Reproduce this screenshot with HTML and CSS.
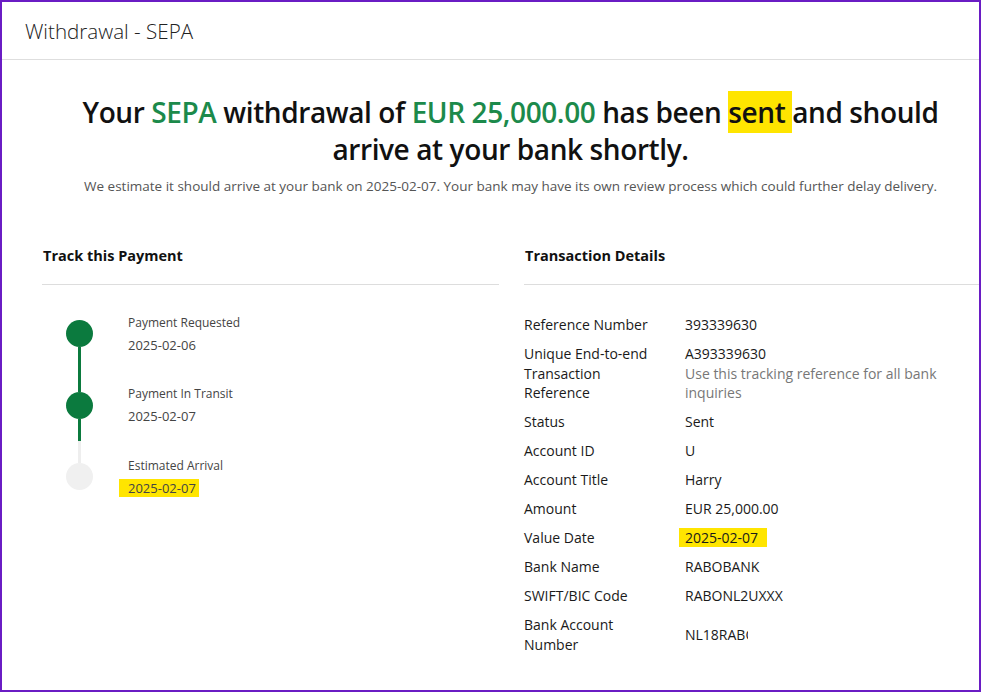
FILE: index.html
```html
<!DOCTYPE html>
<html lang="en">
<head>
  <meta charset="UTF-8">
  <meta name="viewport" content="width=device-width, initial-scale=1.0">
  <title>Withdrawal - SEPA</title>
  <link rel="stylesheet" href="styles.css">
</head>
<body>

  <div class="frame">
    <div class="page-header">Withdrawal - SEPA</div>

    <div class="content">
      <div class="hero">
        <h1>Your <span class="green">SEPA</span> withdrawal of <span class="green">EUR 25,000.00</span> has been <span class="mark mark-word">sent </span>and should arrive at your bank shortly.</h1>
        <p>We estimate it should arrive at your bank on 2025-02-07. Your bank may have its own review process which could further delay delivery.</p>
      </div>

      <div class="columns">
        <div class="panel">
          <div class="panel-title">Track this Payment</div>
          <div class="steps">
            <div class="step done">
              <div class="track">
                <div class="line line-none"></div>
                <div class="dot"></div>
                <div class="line"></div>
              </div>
              <div class="step-text">
                <div class="step-label">Payment Requested</div>
                <div class="step-date">2025-02-06</div>
              </div>
            </div>
            <div class="step done">
              <div class="track">
                <div class="line"></div>
                <div class="dot"></div>
                <div class="line"></div>
              </div>
              <div class="step-text">
                <div class="step-label">Payment In Transit</div>
                <div class="step-date">2025-02-07</div>
              </div>
            </div>
            <div class="step">
              <div class="track">
                <div class="line"></div>
                <div class="dot"></div>
                <div class="line line-none"></div>
              </div>
              <div class="step-text">
                <div class="step-label">Estimated Arrival</div>
                <div class="step-date"><span class="mark mark-date">2025-02-07</span></div>
              </div>
            </div>
          </div>
        </div>

        <div class="panel">
          <div class="panel-title">Transaction Details</div>
          <div class="details">
            <div class="label">Reference Number</div>
            <div class="value">393339630</div>

            <div class="label">Unique End-to-end Transaction Reference</div>
            <div class="value">A393339630<div class="hint">Use this tracking reference for all bank inquiries</div></div>

            <div class="label">Status</div>
            <div class="value">Sent</div>

            <div class="label">Account ID</div>
            <div class="value">U</div>

            <div class="label">Account Title</div>
            <div class="value">Harry</div>

            <div class="label">Amount</div>
            <div class="value">EUR 25,000.00</div>

            <div class="label">Value Date</div>
            <div class="value"><span class="mark mark-value">2025-02-07</span></div>

            <div class="label">Bank Name</div>
            <div class="value">RABOBANK</div>

            <div class="label">SWIFT/BIC Code</div>
            <div class="value">RABONL2UXXX</div>

            <div class="label">Bank Account Number</div>
            <div class="value"><span class="cut">NL18RABO0300000000</span></div>
          </div>
        </div>
      </div>
    </div>
  </div>

</body>
</html>
```

FILE: styles.css
```css
/* Base */
body {
  margin: 0;
  font-family: 'Open Sans', 'Liberation Sans', sans-serif;
  color: #222;
  background: #fff;
}

.frame {
  height: 692px;
  box-sizing: border-box;
  border: 2px solid #6a1cc4;
  overflow: hidden;
}

.page-header {
  height: 57px;
  padding: 0 23px;
  display: flex;
  align-items: center;
  font-size: 20.6px;
  font-weight: 300;
  color: #222;
  border-bottom: 1px solid #dedede;
}

.content {
  padding-left: 40px;
}

/* Hero */
.hero {
  text-align: center;
  padding-top: 34px;
}

.hero h1 {
  margin: 0;
  font-size: 28px;
  line-height: 37px;
  font-weight: 600;
  color: #111;
  letter-spacing: -0.4px;
}

.green {
  color: #1c8a4b;
}

.mark {
  background: #ffe500;
}

.mark-word {
  padding: 2px 0;
}

.hero p {
  margin: 8px 0 0;
  font-size: 13.5px;
  line-height: 20px;
  color: #555;
}

/* Columns */
.columns {
  display: grid;
  grid-template-columns: 457px 457px;
  column-gap: 25px;
  margin-top: 50px;
}

.panel-title {
  font-size: 14.5px;
  font-weight: 700;
  line-height: 20px;
  color: #111;
  padding: 0 1px 18px;
  border-bottom: 1px solid #ddd;
}

/* Timeline */
.steps {
  padding: 13px 0 0 24px;
}

.step {
  display: flex;
  height: 71.5px;
}

.track {
  width: 27px;
  display: flex;
  flex-direction: column;
  align-items: center;
}

.line {
  flex: 1;
  width: 3px;
  background: #eee;
}

.done .line {
  background: #0b7a3e;
}

.line.line-none {
  background: transparent;
}

.dot {
  width: 27px;
  height: 27px;
  border-radius: 50%;
  background: #f0f0f0;
}

.done .dot {
  background: #0b7a3e;
}

.step-text {
  margin-left: 35px;
  align-self: center;
  color: #444;
}

.step-label {
  font-size: 12px;
  line-height: 18px;
  margin-bottom: 4px;
}

.step-date {
  font-size: 13px;
  line-height: 18px;
}

.mark-date {
  padding: 0 3px 0 9px;
  margin-left: -9px;
}

/* Details */
.details {
  display: grid;
  grid-template-columns: 135px 1fr;
  column-gap: 26px;
  row-gap: 9.5px;
  margin-top: 30px;
  font-size: 14px;
  line-height: 19.5px;
  color: #1a1a1a;
}

.label, .value {
  align-self: center;
}

.hint {
  color: #777;
  max-width: 270px;
}

.mark-value {
  padding: 0 9px 0 6px;
  margin-left: -6px;
}

.cut {
  display: inline-block;
  width: 63px;
  overflow: hidden;
  white-space: nowrap;
  vertical-align: top;
}
```
